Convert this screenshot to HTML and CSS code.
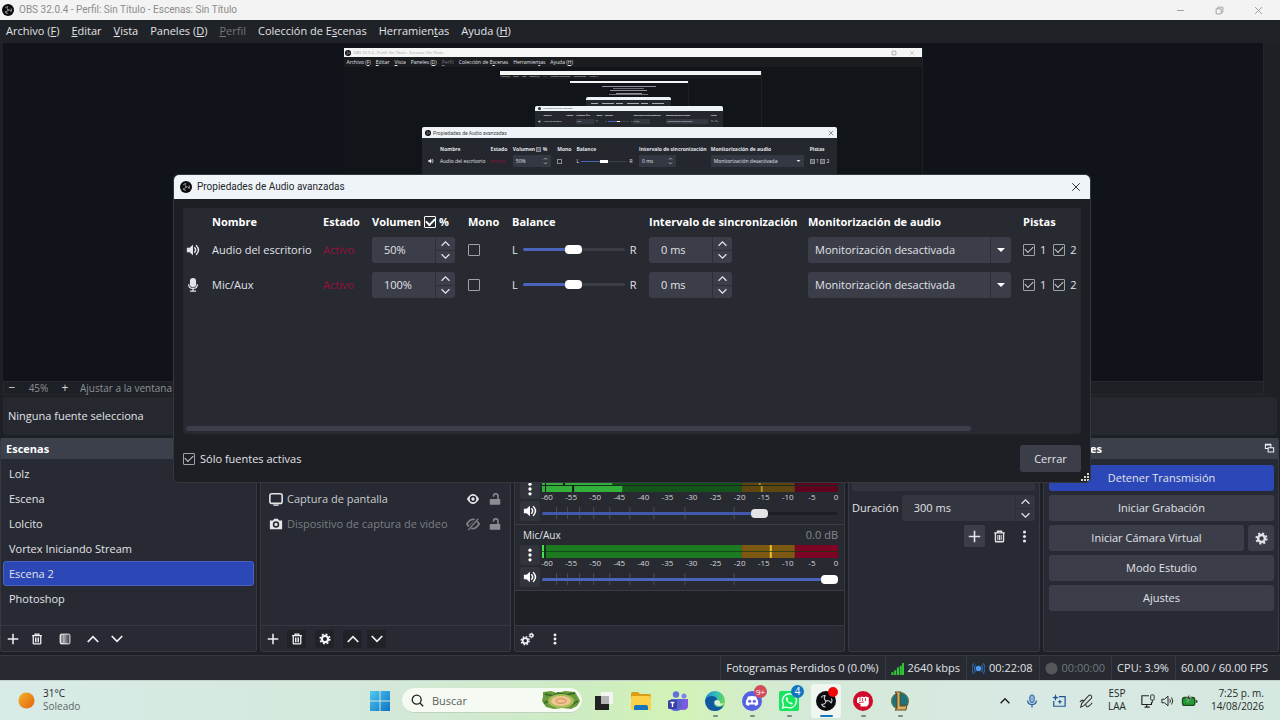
FILE: index.html
```
<!DOCTYPE html>
<html lang="es">
	<head>
		<meta charset="utf-8" />
		<title>OBS 32.0.4 - Perfil: Sin Título - Escenas: Sin Título</title>
		<link rel="stylesheet" href="styles.css">
	</head>
	<body>
		<!-- iconos compartidos -->
		<svg class="sprite" width="0" height="0">
			<symbol id="obs" viewBox="0 0 24 24">
				<circle cx="12" cy="12" r="12" fill="#0b0b0d"/>
				<g fill="none" stroke="#c4c7cd" stroke-width="1.400" stroke-linecap="round">
					<path d="M12 12C10 10.500 9.500 8 11 5.500M11 5.500Q8 5 6.500 7.500"/>
					<path d="M12 12C10 10.500 9.500 8 11 5.500M11 5.500Q8 5 6.500 7.500" transform="rotate(120 12 12)"/>
					<path d="M12 12C10 10.500 9.500 8 11 5.500M11 5.500Q8 5 6.500 7.500" transform="rotate(240 12 12)"/>
				</g>
			</symbol>
			<symbol id="speaker" viewBox="0 0 16 16">
				<path d="M1 5.500h3L8 2v12l-4-3.500H1z" fill="currentColor"/>
				<path d="M10 5.500q2 2.500 0 5M12 3q4.500 5 0 10" fill="none" stroke="currentColor" stroke-width="1.700" stroke-linecap="round"/>
			</symbol>
			<symbol id="mic" viewBox="0 0 16 16">
				<rect x="4.500" y="0" width="7" height="10.500" rx="3.500" fill="currentColor"/>
				<path d="M3 7c0 6.500 10 6.500 10 0M8 12v3M4.500 15h7" fill="none" stroke="currentColor" stroke-width="1.500"/>
			</symbol>
			<symbol id="plus" viewBox="0 0 16 16">
				<path d="M8 1v14M1 8h14" stroke="currentColor" stroke-width="2"/>
			</symbol>
			<symbol id="trash" viewBox="0 0 16 16">
				<path d="M1.500 3.500h13M5.500 3V1.500h5V3M3 4v9.500q0 1 1 1h8q1 0 1-1V4" fill="none" stroke="currentColor" stroke-width="1.700"/>
				<path d="M6 6v6.500M8 6v6.500M10 6v6.500" stroke="currentColor" stroke-width="1.300"/>
			</symbol>
			<symbol id="up" viewBox="0 0 16 16">
				<path d="M1 12l7-7 7 7" fill="none" stroke="currentColor" stroke-width="2.300"/>
			</symbol>
			<symbol id="down" viewBox="0 0 16 16">
				<path d="M1 4l7 7 7-7" fill="none" stroke="currentColor" stroke-width="2.300"/>
			</symbol>
			<symbol id="dots" viewBox="0 0 16 16">
				<circle cx="8" cy="2.500" r="1.900" fill="currentColor"/>
				<circle cx="8" cy="8" r="1.900" fill="currentColor"/>
				<circle cx="8" cy="13.500" r="1.900" fill="currentColor"/>
			</symbol>
			<symbol id="gear" viewBox="0 0 16 16">
				<circle cx="8" cy="8" r="4.200" fill="none" stroke="currentColor" stroke-width="3"/>
				<circle cx="8" cy="8" r="6.400" fill="none" stroke="currentColor" stroke-width="2.200" stroke-dasharray="2.500 2.527"/>
			</symbol>
			<symbol id="gears" viewBox="0 0 16 16">
				<circle cx="6" cy="10" r="3" fill="none" stroke="currentColor" stroke-width="2"/>
				<circle cx="6" cy="10" r="4.600" fill="none" stroke="currentColor" stroke-width="1.600" stroke-dasharray="1.806 1.806"/>
				<circle cx="13" cy="4" r="1.700" fill="none" stroke="currentColor" stroke-width="1.500"/>
				<circle cx="13" cy="4" r="2.700" fill="none" stroke="currentColor" stroke-dasharray="1.400 1.420"/>
			</symbol>
			<symbol id="filter" viewBox="0 0 16 16">
				<linearGradient id="fade"><stop offset="0" stop-color="#eee"/><stop offset="1" stop-color="#333741"/></linearGradient>
				<rect x="1.500" y="1.500" width="13" height="13" rx="1.500" fill="url(#fade)" stroke="currentColor" stroke-width="1.300"/>
				<path d="M4 3v10" stroke="#222"/>
			</symbol>
			<symbol id="lock" viewBox="0 0 16 16">
				<rect x="1" y="8" width="14" height="7.500" rx="1" fill="currentColor"/>
				<path d="M6 5V4q0-3 3-3t3 3v4" fill="none" stroke="currentColor" stroke-width="2"/>
			</symbol>
			<symbol id="close" viewBox="0 0 16 16">
				<path d="M2 2l12 12M14 2L2 14" stroke="currentColor" stroke-width="1.500"/>
			</symbol>
			<symbol id="ticks" viewBox="0 0 295 12" preserveAspectRatio="none">
				<path d="M14.500 0v12M25.500 0v12M37.500 0v12M51.500 0v12M67.500 0v12M87.500 0v12M111.500 0v12M142.500 0v12M191.500 0v12" stroke="#4b4e57"/>
			</symbol>
		</svg>

		<div class="window">
			<header class="titlebar">
				<svg class="logo"><use href="#obs"/></svg>
				<span class="title">OBS 32.0.4 - Perfil: Sin Título - Escenas: Sin Título</span>
				<div class="winbtns">
					<button aria-label="Minimizar"><svg viewBox="0 0 16 16"><path d="M2 8h12" stroke="currentColor" stroke-width="1.500"/></svg></button>
					<button aria-label="Restaurar"><svg viewBox="0 0 16 16"><path d="M2 5h9v9H2zM5 5V2h9v9h-3" fill="none" stroke="currentColor" stroke-width="1.300"/></svg></button>
					<button aria-label="Cerrar ventana"><svg><use href="#close"/></svg></button>
				</div>
			</header>
			<nav class="menubar">
				<a href="#">Archivo (<u>F</u>)</a>
				<a href="#"><u>E</u>ditar</a>
				<a href="#"><u>V</u>ista</a>
				<a href="#">Paneles (<u>D</u>)</a>
				<a href="#" class="off"><u>P</u>erfil</a>
				<a href="#">Colección de E<u>s</u>cenas</a>
				<a href="#">Herramien<u>t</u>as</a>
				<a href="#">Ayuda (<u>H</u>)</a>
			</nav>

			<main class="preview">
				<div class="canvas">
					<!-- captura de la propia pantalla, repetida hacia dentro -->
					<div class="capture">
						<div class="cap-title">
							<svg><use href="#obs"/></svg>
							<span>OBS 32.0.4 - Perfil: Sin Título - Escenas: Sin Título</span>
							<svg class="cap-max" viewBox="0 0 16 16"><path d="M3 3h10v10H3z" fill="none" stroke="#999" stroke-width="2"/></svg>
							<svg class="cap-x"><use href="#close"/></svg>
						</div>
						<div class="cap-menu">
							<span>Archivo (<u>F</u>)</span><span><u>E</u>ditar</span><span><u>V</u>ista</span><span>Paneles (<u>D</u>)</span><span class="off"><u>P</u>erfil</span><span>Colección de E<u>s</u>cenas</span><span>Herramien<u>t</u>as</span><span>Ayuda (<u>H</u>)</span>
						</div>
						<div class="capture capture2">
							<div class="cap-title"></div>
							<div class="cap-menu">
								<span>Archivo (F)</span><span>Editar</span><span>Vista</span><span>Paneles (D)</span><span class="off">Perfil</span><span>Colección de Escenas</span><span>Herramientas</span><span>Ayuda (H)</span>
							</div>
							<div class="capture capture3">
								<div class="cap-title"></div>
								<svg class="depth" viewBox="0 0 119 24">
									<path d="M32 3.500h54M40 7.500h37M46 10.500h26" stroke="#8f929a"/>
									<path d="M43 5.500h31M39 11.500h39" stroke="#6d7078"/>
								</svg>
							</div>
						</div>
					</div>
					<div class="mini mini3">
						<div class="mini-title"></div>
						<svg viewBox="0 0 85 8"><path d="M5 3.500h75" stroke="#a9acb2" stroke-dasharray="7 4 12 2"/><path d="M5 6.500h75" stroke="#686c75" stroke-dasharray="10 3 5 2"/></svg>
					</div>
					<div class="mini mini2">
						<div class="mini-title"><svg><use href="#obs"/></svg><span>Propiedades de Audio avanzadas</span></div>
						<div class="mini-grid">
							<b></b><b>Nombre</b><b>Estado</b><b>Volumen ☑ %</b><b>Mono</b><b>Balance</b><b>Intervalo de sincronización</b><b>Monitorización de audio</b><b>Pistas</b>
							<i><svg><use href="#speaker"/></svg></i><i>Audio del escritorio</i><i class="red">Activo</i><i><em class="w-spin">50%</em></i><i>☐</i><i class="bal">L<em class="w-bar"></em>R</i><i><em class="w-spin">0 ms</em></i><i><em class="w-sel">Monitorización desactivada</em></i><i>☑ 1 ☑ 2</i>
						</div>
					</div>
					<div class="mini mini1">
						<div class="mini-title"><svg><use href="#obs"/></svg><span>Propiedades de Audio avanzadas</span><svg class="x"><use href="#close"/></svg></div>
						<div class="mini-grid">
							<b></b><b>Nombre</b><b>Estado</b><b>Volumen <em class="w-box on"></em> %</b><b>Mono</b><b>Balance</b><b>Intervalo de sincronización</b><b>Monitorización de audio</b><b>Pistas</b>
							<i><svg><use href="#speaker"/></svg></i><i>Audio del escritorio</i><i class="red">Activo</i><i><em class="w-spin">50%<svg viewBox="0 0 8 16"><path d="M1 5l3-3 3 3M1 11l3 3 3-3" fill="none" stroke="currentColor" stroke-width="1.300"/></svg></em></i><i><em class="w-box"></em></i><i class="bal">L<em class="w-bar"></em>R</i><i><em class="w-spin">0 ms<svg viewBox="0 0 8 16"><path d="M1 5l3-3 3 3M1 11l3 3 3-3" fill="none" stroke="currentColor" stroke-width="1.300"/></svg></em></i><i><em class="w-sel">Monitorización desactivada<svg viewBox="0 0 8 16"><path d="M0 6h8l-4 4z" fill="currentColor"/></svg></em></i><i><em class="w-box on"></em> 1 <em class="w-box on"></em> 2</i>
						</div>
					</div>
				</div>
				<div class="zoombar">
					<button aria-label="Alejar">−</button>
					<span class="pct">45%</span>
					<button aria-label="Acercar">+</button>
					<span class="fit">Ajustar a la ventana</span>
				</div>
			</main>

			<div class="context">Ninguna fuente selecciona</div>

			<section class="docks">
				<div class="dock">
					<h2>Escenas</h2>
					<ul class="list">
						<li>Lolz</li>
						<li>Escena</li>
						<li>Lolcito</li>
						<li>Vortex Iniciando Stream</li>
						<li class="sel">Escena 2</li>
						<li>Photoshop</li>
					</ul>
					<div class="tools">
						<button aria-label="Añadir escena"><svg><use href="#plus"/></svg></button>
						<button aria-label="Eliminar escena"><svg><use href="#trash"/></svg></button>
						<button aria-label="Filtros" class="wide"><svg><use href="#filter"/></svg></button>
						<button aria-label="Subir"><svg><use href="#up"/></svg></button>
						<button aria-label="Bajar"><svg><use href="#down"/></svg></button>
					</div>
				</div>

				<div class="dock">
					<h2></h2>
					<ul class="list sources">
						<li>
							<svg viewBox="0 0 16 16"><rect x="1" y="2" width="14" height="11" rx="2" fill="none" stroke="currentColor" stroke-width="1.800"/><path d="M5 15h6" stroke="currentColor" stroke-width="1.500"/></svg>
							<span>Captura de pantalla</span>
							<svg viewBox="0 0 16 16"><path d="M1 8q7-11.500 14 0q-7 11.500-14 0z" fill="currentColor"/><circle cx="8" cy="8" r="3.700" fill="#272a33"/><circle cx="8" cy="8" r="1.900" fill="currentColor"/></svg>
							<svg class="lock"><use href="#lock"/></svg>
						</li>
						<li class="hidden-src">
							<svg viewBox="0 0 16 16"><path d="M1 4h3.500L6 2h4l1.500 2H15v10H1z" fill="currentColor"/><circle cx="8" cy="8.500" r="2.800" fill="none" stroke="#272a33" stroke-width="1.800"/></svg>
							<span>Dispositivo de captura de video</span>
							<svg viewBox="0 0 16 16"><path d="M1 8q7-10.500 14 0q-7 10.500-14 0z" fill="none" stroke="currentColor" stroke-width="2.200"/><path d="M5 10l5-5" stroke="currentColor" stroke-width="3"/><path d="M2 15L14 1" stroke="#272a33" stroke-width="3.500"/><path d="M2.500 15L14 2" stroke="currentColor" stroke-width="1.700"/></svg>
							<svg class="lock"><use href="#lock"/></svg>
						</li>
					</ul>
					<div class="tools boxed">
						<button aria-label="Añadir fuente" class="flat"><svg><use href="#plus"/></svg></button>
						<button aria-label="Eliminar fuente"><svg><use href="#trash"/></svg></button>
						<button aria-label="Propiedades" class="wide"><svg><use href="#gear"/></svg></button>
						<button aria-label="Subir fuente"><svg><use href="#up"/></svg></button>
						<button aria-label="Bajar fuente"><svg><use href="#down"/></svg></button>
					</div>
				</div>

				<div class="dock">
					<h2></h2>
					<div class="mixer">
						<div class="channel">
							<div class="ch-name"></div>
							<div class="ch-body">
								<div class="ch-btns">
									<button aria-label="Opciones del escritorio"><svg><use href="#dots"/></svg></button>
									<button aria-label="Silenciar escritorio"><svg><use href="#speaker"/></svg></button>
								</div>
								<div class="ch-meter">
									<svg class="meter" viewBox="0 0 295 13" preserveAspectRatio="none">
										<path d="M0 0h199v13H0z" fill="#14541a"/><path d="M199 0h53v13h-53z" fill="#5d4610"/><path d="M252 0h43v13h-43z" fill="#5e0420"/>
										<path d="M0 0h70v6H0zM0 7h80v6H0z" fill="#31b139"/>
										<path d="M3 0h1v13H3zM21 0h2v6h-2zM30 7h2v6h-2z" fill="#0d140e"/>
										<path d="M216 0h2v6h-2zM218 7h2v6h-2z" fill="#b28d27"/>
										<path d="M0 6h295v1H0z" fill="#1a2a20"/>
									</svg>
									<div class="scale"><span>-60</span><span>-55</span><span>-50</span><span>-45</span><span>-40</span><span>-35</span><span>-30</span><span>-25</span><span>-20</span><span>-15</span><span>-10</span><span>-5</span><span>0</span></div>
									<div class="fader dim">
										<svg><use href="#ticks"/></svg>
										<input type="range" aria-label="Volumen escritorio" min="0" max="100" value="75" style="--fill: 75%">
									</div>
								</div>
							</div>
						</div>
						<div class="channel">
							<div class="ch-name"><span>Mic/Aux</span><span class="db">0.0 dB</span></div>
							<div class="ch-body">
								<div class="ch-btns">
									<button aria-label="Opciones de Mic/Aux"><svg><use href="#dots"/></svg></button>
									<button aria-label="Silenciar Mic/Aux"><svg><use href="#speaker"/></svg></button>
								</div>
								<div class="ch-meter">
									<svg class="meter" viewBox="0 0 295 13" preserveAspectRatio="none">
										<path d="M0 0h199v13H0z" fill="#1c7a20"/><path d="M199 0h53v13h-53z" fill="#7c5812"/><path d="M252 0h43v13h-43z" fill="#7c0526"/>
										<path d="M0 0h2v13H0z" fill="#4be04f"/><path d="M2 0h2v13H2z" fill="#10301a"/>
										<path d="M227 0h2v13h-2z" fill="#f2c02c"/>
										<path d="M0 6h295v1H0z" fill="#0d3a16" opacity=".7"/>
									</svg>
									<div class="scale"><span>-60</span><span>-55</span><span>-50</span><span>-45</span><span>-40</span><span>-35</span><span>-30</span><span>-25</span><span>-20</span><span>-15</span><span>-10</span><span>-5</span><span>0</span></div>
									<div class="fader">
										<svg><use href="#ticks"/></svg>
										<input type="range" aria-label="Volumen Mic/Aux" min="0" max="100" value="100" style="--fill: 100%">
									</div>
								</div>
							</div>
						</div>
					</div>
					<div class="tools">
						<button aria-label="Audio avanzado"><svg class="big"><use href="#gears"/></svg></button>
						<button aria-label="Opciones del mezclador" class="wide"><svg><use href="#dots"/></svg></button>
					</div>
				</div>

				<div class="dock">
					<h2></h2>
					<div class="trans">
						<div class="combo-strip"></div>
						<div class="row">
							<label for="dur">Duración</label>
							<div class="spin"><input id="dur" type="text" value="300 ms"><button aria-label="Más duración"><svg><use href="#up"/></svg></button><button aria-label="Menos duración"><svg><use href="#down"/></svg></button></div>
						</div>
						<div class="trans-btns">
							<button class="lit" aria-label="Añadir transición"><svg><use href="#plus"/></svg></button>
							<button aria-label="Eliminar transición"><svg><use href="#trash"/></svg></button>
							<button aria-label="Más opciones"><svg><use href="#dots"/></svg></button>
						</div>
					</div>
				</div>

				<div class="dock">
					<h2>Controles <svg viewBox="0 0 16 16"><path d="M2 2h8v6H2zM2 3h8" fill="none" stroke="#eee" stroke-width="1.500"/><path d="M6 7h8v6H6z" fill="#3c404b" stroke="#eee" stroke-width="1.500"/></svg></h2>
					<div class="controls">
						<button class="btn primary">Detener Transmisión</button>
						<button class="btn">Iniciar Grabación</button>
						<div class="pair">
							<button class="btn">Iniciar Cámara Virtual</button>
							<button class="btn cog" aria-label="Configurar cámara"><svg><use href="#gear"/></svg></button>
						</div>
						<button class="btn">Modo Estudio</button>
						<button class="btn">Ajustes</button>
					</div>
				</div>
			</section>

			<footer class="status">
				<span>Fotogramas Perdidos 0 (0.0%)</span>
				<span><svg viewBox="0 0 14 14"><path d="M1.500 14v-3M4.500 14V9M7.500 14V6M10.500 14V4M13 14V1" stroke="#30c437" stroke-width="2.300"/></svg>2640 kbps</span>
				<span><svg viewBox="0 0 14 14"><circle cx="7" cy="7" r="3" fill="#4b9af0"/><path d="M4 3q-3 4 0 8M10 3q3 4 0 8M2 1.500q-4 5.500 0 11M12 1.500q4 5.500 0 11" fill="none" stroke="#2d68ad" stroke-width="1.200"/></svg>00:22:08</span>
				<span class="off"><svg viewBox="0 0 14 14"><circle cx="7" cy="7" r="6.500" fill="#55575b"/></svg>00:00:00</span>
				<span>CPU: 3.9%</span>
				<span>60.00 / 60.00 FPS</span>
			</footer>
		</div>

		<!-- propiedades de audio avanzadas -->
		<div class="dialog" role="dialog" aria-labelledby="dlg-title">
			<header class="dlg-title">
				<svg class="logo"><use href="#obs"/></svg>
				<span id="dlg-title">Propiedades de Audio avanzadas</span>
				<button aria-label="Cerrar diálogo"><svg><use href="#close"/></svg></button>
			</header>
			<div class="dlg-area">
				<table>
					<colgroup><col class="c-icon"><col class="c-name"><col class="c-state"><col class="c-vol"><col class="c-mono"><col class="c-bal"><col class="c-sync"><col class="c-mon"><col></colgroup>
					<thead>
						<tr>
							<th></th><th>Nombre</th><th>Estado</th>
							<th><label>Volumen <input type="checkbox" class="strong" checked> %</label></th>
							<th>Mono</th><th>Balance</th><th>Intervalo de sincronización</th><th>Monitorización de audio</th><th>Pistas</th>
						</tr>
					</thead>
					<tbody>
						<tr>
							<td><svg class="src"><use href="#speaker"/></svg></td>
							<td>Audio del escritorio</td>
							<td class="red">Activo</td>
							<td><div class="spin"><input type="text" aria-label="Volumen" value="50%"><button aria-label="Subir volumen"><svg><use href="#up"/></svg></button><button aria-label="Bajar volumen"><svg><use href="#down"/></svg></button></div></td>
							<td><label><input type="checkbox" aria-label="Mono"></label></td>
							<td><div class="balance">L <input type="range" aria-label="Balance" value="50" style="--fill: 50%"> R</div></td>
							<td><div class="spin"><input type="text" aria-label="Sincronización" value="0 ms"><button aria-label="Más retardo"><svg><use href="#up"/></svg></button><button aria-label="Menos retardo"><svg><use href="#down"/></svg></button></div></td>
							<td><div class="combo"><select aria-label="Monitorización"><option>Monitorización desactivada</option></select></div></td>
							<td><div class="tracks"><label><input type="checkbox" checked>1</label><label><input type="checkbox" checked>2</label></div></td>
						</tr>
						<tr>
							<td><svg class="src"><use href="#mic"/></svg></td>
							<td>Mic/Aux</td>
							<td class="red">Activo</td>
							<td><div class="spin"><input type="text" aria-label="Volumen Mic" value="100%"><button aria-label="Subir volumen"><svg><use href="#up"/></svg></button><button aria-label="Bajar volumen"><svg><use href="#down"/></svg></button></div></td>
							<td><label><input type="checkbox" aria-label="Mono Mic"></label></td>
							<td><div class="balance">L <input type="range" aria-label="Balance Mic" value="50" style="--fill: 50%"> R</div></td>
							<td><div class="spin"><input type="text" aria-label="Sincronización Mic" value="0 ms"><button aria-label="Más retardo"><svg><use href="#up"/></svg></button><button aria-label="Menos retardo"><svg><use href="#down"/></svg></button></div></td>
							<td><div class="combo"><select aria-label="Monitorización Mic"><option>Monitorización desactivada</option></select></div></td>
							<td><div class="tracks"><label><input type="checkbox" checked>1</label><label><input type="checkbox" checked>2</label></div></td>
						</tr>
					</tbody>
				</table>
				<div class="hscroll"></div>
			</div>
			<div class="dlg-foot">
				<label><input type="checkbox" checked>Sólo fuentes activas</label>
				<button class="btn">Cerrar</button>
			</div>
			<svg class="grip" viewBox="0 0 8 8"><path d="M6 0h2v2H6zM3 3h2v2H3zM6 3h2v2H6zM0 6h2v2H0zM3 6h2v2H3zM6 6h2v2H6z" fill="#d9d9c8"/></svg>
		</div>

		<footer class="taskbar">
			<div class="weather">
				<svg viewBox="0 0 18 18"><linearGradient id="sun" x2="1" y2="1"><stop offset="0" stop-color="#f5b32c"/><stop offset="1" stop-color="#e4620e"/></linearGradient><circle cx="9" cy="9" r="8.500" fill="url(#sun)"/></svg>
				<p>31°C<br><span>Soleado</span></p>
			</div>
			<div class="apps">
				<button class="app" aria-label="Inicio"><svg viewBox="0 0 20 20"><linearGradient id="win" x2="1" y2="1"><stop offset="0" stop-color="#4fc9f0"/><stop offset="1" stop-color="#0d72c5"/></linearGradient><path d="M0 0h9.500v9.500H0zM10.500 0H20v9.500h-9.500zM0 10.500h9.500V20H0zM10.500 10.500H20V20h-9.500z" fill="url(#win)"/></svg></button>
				<div class="search">
					<svg class="lens" viewBox="0 0 16 16"><circle cx="7" cy="7" r="5.500" fill="none" stroke="#222" stroke-width="1.600"/><path d="M11 11l4 4" stroke="#222" stroke-width="1.800"/></svg>
					<input type="text" aria-label="Buscar" placeholder="Buscar">
					<svg class="art" viewBox="0 0 40 20"><path d="M2 2l8-1 6 2 8-2 10 1 3 5 2 4-3 5-6 3-9-1-8 1-8-2-4-6 1-4z" fill="#6a9a3a"/><path d="M4 4l8 2 5-3 8 2 9-2M3 13l8-3M30 15l7-4" stroke="#38702c" stroke-width="2" fill="none"/><ellipse cx="20" cy="11" rx="13" ry="7" fill="#a7bd58"/><ellipse cx="20" cy="11" rx="10" ry="5" fill="#efc591"/><ellipse cx="20" cy="11" rx="5" ry="2.200" fill="none" stroke="#d28461"/></svg>
				</div>
				<button class="app" aria-label="Vista de tareas"><svg viewBox="0 0 20 20"><path d="M7 1h12v12H7z" fill="#f4f4f4"/><path d="M1 5h6v8h8v6H1z" fill="#222"/><path d="M7 5h8v8H7z" fill="#b5b5b5"/></svg></button>
				<button class="app" aria-label="Explorador"><svg viewBox="0 0 20 20"><path d="M0 3q0-2 2-2h5l2 2h9q2 0 2 2v4H0z" fill="#dc9d16"/><rect y="5" width="20" height="14" rx="1.500" fill="#fbcf47"/><path d="M3 19v-3q0-2 2-2h10q2 0 2 2v3z" fill="#1673bd"/></svg></button>
				<button class="app" aria-label="Teams"><svg viewBox="0 0 20 20"><circle cx="8" cy="3.500" r="3.200" fill="#6470dc"/><circle cx="16" cy="5" r="2.500" fill="#7c84e8"/><path d="M10 8h10v7q0 4-5 4t-5-4z" fill="#7b5be0"/><path d="M3 8h11v7q0 5-6 5t-6-5z" fill="#5a62d2"/><rect y="9" width="9" height="9" rx="1.500" fill="#3c3fa5"/><path d="M2.500 11.500h4M4.500 11.500v4.500" stroke="#fff" stroke-width="1.300"/></svg></button>
				<button class="app run" aria-label="Edge"><svg viewBox="0 0 20 20"><linearGradient id="edge" x2="1" y2=".3"><stop offset="0" stop-color="#1887d8"/><stop offset=".6" stop-color="#35c1b5"/><stop offset="1" stop-color="#66d655"/></linearGradient><circle cx="10" cy="10" r="10" fill="url(#edge)"/><path d="M0 10q1-5 7-5 6 .5 5 5-3-1-3 2 0 4 5 4 3 0 5-2-3 6-9 6-9 0-10-10z" fill="#125a9f"/><path d="M12 9q-3 0-2.500 3 1 3 5 3 3 0 5-3-2 1-5 0 2-2-2.500-3z" fill="#dcf0d4"/></svg></button>
				<button class="app run" aria-label="Discord"><svg viewBox="0 0 20 20"><circle cx="10" cy="10" r="10" fill="#5560e4"/><path d="M6 5.500q4-1.200 8 0 2.500 4 2.200 8L13.500 15l-1-1.500h-5L6.500 15l-2.700-1.500Q3.500 9.500 6 5.500z" fill="#fff"/><circle cx="7.700" cy="10.300" r="1.500" fill="#5560e4"/><circle cx="12.300" cy="10.300" r="1.500" fill="#5560e4"/></svg><span class="badge pink">9+</span></button>
				<button class="app run" aria-label="WhatsApp"><svg viewBox="0 0 20 20"><rect width="20" height="20" rx="2" fill="#15e45c"/><path d="M3.500 17l1-3.500a7 7 0 1 1 2.700 2.500z" fill="none" stroke="#e8fff0" stroke-width="1.400"/><path d="M7 6.500q-1 3 2.500 5.500 3.500 2.500 4.500.5l-2-1.500-1.300.7-2.200-2.200.8-1.300L8.300 6z" fill="#e8fff0"/></svg><span class="badge navy">4</span></button>
				<button class="app run active" aria-label="OBS"><svg><use href="#obs"/></svg><span class="badge rec"></span></button>
				<button class="app run" aria-label="Juego"><svg viewBox="0 0 20 20"><circle cx="10" cy="10" r="10" fill="#cf0a2c"/><path d="M4 8l1.500-2 2 .5 1.500-1 2 .7 1.800-.7 3 1V13l-2 2.500H7.500V13L4 11.500z" fill="#fff"/><path d="M7 7v3M9.500 7v3M12.500 7v3M6 11.500l5-.5" stroke="#cf0a2c" stroke-width=".800"/></svg></button>
				<button class="app run" aria-label="League of Legends"><svg viewBox="0 0 20 20"><circle cx="10" cy="10" r="8.500" fill="#1b737c" stroke="#7f6c3c"/><path d="M5 1h6l-1 2v12h5l2-2-1 6H5l2-2V3z" fill="#d9b15c" stroke="#65461b"/></svg></button>
			</div>
			<div class="tray">
				<svg viewBox="0 0 16 16"><path d="M3 10.500l5-5 5 5" fill="none" stroke="#222" stroke-width="1.700"/></svg>
				<svg class="blue" viewBox="0 0 16 16"><rect x="5.500" y="1" width="5" height="9" rx="2.500" fill="#8eb4e0" stroke="currentColor"/><path d="M3 7.500c0 6 10 6 10 0M8 12v3.500" fill="none" stroke="currentColor" stroke-width="1.300"/></svg>
				<svg class="blue" viewBox="0 0 16 16"><path d="M8 3h7v11H2V8" fill="none" stroke="currentColor" stroke-width="1.400"/><path d="M4 0l1 3 3 1-3 1-1 3-1-3-3-1 3-1zM9 6l.8 2 2 .8-2 .8L9 12l-.8-2.400-2-.8 2-.8z" fill="currentColor"/></svg>
				<svg viewBox="0 0 16 16"><path d="M2 15l1-4 8-9q2-1.500 3 0t0 3l-8 8zM1 9q4-4 4 0M8 12q0 4 3 2t4-4" fill="none" stroke="#333" stroke-width="1.200"/></svg>
				<p class="lang">ESP<br>LAA</p>
				<div class="sys">
					<svg viewBox="0 0 16 16"><path d="M9 2H1v10h11V9M4 15h6M6.500 12v3" fill="none" stroke="#222" stroke-width="1.300"/><rect x="11" y="1" width="4" height="6" rx="1" fill="none" stroke="#222"/><path d="M13 7v3" stroke="#222"/></svg>
					<svg viewBox="0 0 16 16"><path d="M1 6h3l4-3.500v11L4 10H1zM10 6q1.500 2 0 4M12 4q3 4 0 8" fill="none" stroke="#222" stroke-width="1.100"/></svg>
					<svg class="batt" viewBox="0 0 18 16"><rect x="1" y="4" width="14" height="9" rx="2.500" fill="#259b35" stroke="#1c4d22" stroke-width="1.500"/><path d="M17 7v3" stroke="#1c4d22" stroke-width="2"/><path d="M9 0L5.500 5.500h2.500L7 9l4-5H8.500z" fill="#111" stroke="#d9e9dc" stroke-width=".600"/></svg>
				</div>
				<p class="clock">7:25 p. m.<br>14/08/2026</p>
			</div>
		</footer>
	</body>
</html>
```
FILE: styles.css
```
* {
	box-sizing: border-box;
}
body {
	margin: 0;
	min-height: 100vh;
	display: flex;
	flex-direction: column;
	background: #1d2025;
	color: #e1e3e8;
	font-family: "Open Sans", "Noto Sans", sans-serif;
	font-size: 11px;
	line-height: 16px;
	overflow: hidden;
}
button, input, select {
	font: inherit;
	color: inherit;
	margin: 0;
}
button {
	display: flex;
	align-items: center;
	justify-content: center;
	padding: 0;
	border: 0;
	background: none;
}
p, h2, ul {
	margin: 0;
	padding: 0;
}
svg {
	display: block;
	flex: none;
}
.sprite {
	position: absolute;
}
.off {
	color: #74777d;
}

/** ventana principal **/
.window {
	flex: 1;
	display: flex;
	flex-direction: column;
}
.titlebar {
	display: flex;
	align-items: center;
	height: 20px;
	padding: 0 2px;
	gap: 5px;
	background: #f3f3f3;
	color: #8c8c8c;
}
.title {
	font-family: Roboto, sans-serif;
	font-size: 10px;
}
.logo {
	width: 12px;
	height: 12px;
}
.winbtns {
	margin-left: auto;
	display: flex;
}
.winbtns button {
	width: 39px;
}
.winbtns svg {
	width: 9px;
	height: 9px;
}
.menubar {
	display: flex;
	gap: 12px;
	padding: 3px 6px 4px;
	background: #1f2226;
}
.menubar a {
	color: #e1e3e8;
	text-decoration: none;
}
.menubar a.off {
	color: #74777d;
}

/** vista previa **/
.preview {
	flex: 1;
	display: flex;
	flex-direction: column;
	padding: 0 16px 0 3px;
}
.canvas {
	position: relative;
	flex: 1;
	background: #10131a;
	border-right: 1px solid #23262b;
	overflow: hidden;
}
.zoombar {
	display: flex;
	align-items: center;
	height: 14px;
	border: 1px solid #25282c;
	color: #8e9197;
	font-size: 10px;
}
.zoombar button {
	width: 16px;
	color: #d5d7db;
	font-size: 12px;
}
.zoombar .pct {
	width: 37px;
	text-align: center;
}
.zoombar .fit {
	margin-left: 7px;
}
.context {
	margin: 2px 3px 3px;
	padding: 11px 5px 11px;
	background: #25282f;
	border-radius: 3px;
}

.capture {
	width: 579px;
	height: 300px;
	margin: 5px auto 0;
	background: #11151a;
	border-right: 1px solid #1d2025;
	overflow: hidden;
	font-size: 5px;
	line-height: 8px;
}
.cap-title {
	display: flex;
	align-items: center;
	gap: 3px;
	height: 9px;
	padding: 0 2px 0 1px;
	background: #f5f5f5;
	color: #a4a4a4;
	font-size: 4px;
}
.cap-title svg {
	width: 6px;
	height: 6px;
}
.cap-title .cap-max {
	margin-left: auto;
	margin-right: 9px;
}
.cap-title .cap-x {
	margin-right: 5px;
}
.cap-menu {
	display: flex;
	gap: 5px;
	padding: 1px 3px;
	background: #1a1c20;
}
.capture2 {
	width: 262px;
	height: 200px;
	margin: 4px 0 0 156px;
	font-size: 2px;
	line-height: 4px;
}
.capture2 .cap-title {
	height: 4px;
}
.capture2 .cap-menu {
	gap: 3px;
	padding: 0 1px;
}
.capture3 {
	width: 119px;
	height: 90px;
	margin: 2px 0 0 70px;
}
.capture3 .cap-title {
	height: 2px;
}
.depth {
	width: 119px;
	height: 24px;
}

/** diálogos en miniatura **/
.mini {
	position: absolute;
	background: #24272e;
	overflow: hidden;
	border-radius: 2px 2px 0 0;
}
.mini1 {
	left: 419px;
	top: 84px;
	width: 415px;
	height: 140px;
	font-size: 5px;
	line-height: 8px;
}
.mini2 {
	left: 532px;
	top: 63px;
	width: 188px;
	height: 60px;
	font-size: 2px;
	line-height: 3px;
}
.mini3 {
	left: 583px;
	top: 54px;
	width: 85px;
	height: 20px;
}
.mini-title {
	display: flex;
	align-items: center;
	gap: 2px;
	height: 11px;
	padding: 0 3px;
	background: #eef3f7;
	color: #444;
	font-family: Roboto, sans-serif;
}
.mini-title .x {
	margin-left: auto;
}
.mini-title svg, .mini-grid svg {
	width: 6px;
	height: 6px;
}
.mini2 .mini-title {
	height: 5px;
}
.mini2 svg {
	width: 3px;
	height: 3px;
}
.mini3 .mini-title {
	height: 3px;
}
.mini3 > svg {
	width: 85px;
	height: 8px;
}
.mini-grid {
	display: grid;
	grid-template-columns: 12fr 50fr 22fr 44fr 19fr 62fr 71fr 98fr 27fr;
	grid-auto-rows: 12px;
	align-items: center;
	padding: 5px 0 0 6px;
	white-space: nowrap;
}
.mini2 .mini-grid {
	grid-auto-rows: 6px;
	padding: 1px 0 0 3px;
}
.mini-grid i, .mini-grid em {
	font-style: normal;
}
.w-spin, .w-sel {
	display: flex;
	align-items: center;
	justify-content: space-between;
	width: 86%;
	padding: 2px 3px;
	background: #343842;
}
.mini2 em {
	padding: 1px;
}
.mini-grid i:nth-child(16) .w-spin {
	width: 52%;
}
.w-sel {
	width: 94%;
}
.mini-grid em svg {
	width: 5px;
	height: 8px;
}
.w-box {
	display: inline-block;
	width: 5px;
	height: 5px;
	border: 1px solid #8a8d94;
	vertical-align: middle;
}
.w-box.on {
	background: #5b5e66;
}
.bal {
	display: flex;
	align-items: center;
	gap: 2px;
}
.w-bar {
	width: 74%;
	height: 3px;
	background: linear-gradient(90deg, transparent 42%, #fff 42%, #fff 58%, transparent 58%), linear-gradient(90deg, #4760b8 50%, #3b3f49 50%) center / 100% 1px no-repeat;
}
.mini2 .w-bar {
	height: 1px;
	padding: 0;
}
.red {
	color: #9a1039;
}

/** paneles **/
.docks {
	display: grid;
	grid-template-columns: 257fr 251fr 331fr 192fr 236fr;
	gap: 3px;
	padding-right: 1px;
}
.dock {
	display: flex;
	flex-direction: column;
	min-height: 214px;
	min-width: 0;
	background: #272a33;
	border: 1px solid #363943;
	border-top: 0;
	border-radius: 3px;
}
.dock h2 {
	display: flex;
	align-items: center;
	justify-content: space-between;
	height: 21px;
	padding: 0 3px 0 5px;
	background: #3c404b;
	font-size: 11px;
	color: #fff;
}
.dock h2 svg {
	width: 11px;
	height: 11px;
}
.list {
	flex: 1;
	list-style: none;
	padding: 2px;
}
.list li {
	display: flex;
	align-items: center;
	height: 25px;
	padding: 0 5px;
	border: 1px solid transparent;
	border-radius: 3px;
}
.list .sel {
	background: #2c47b6;
	border-color: #4a61bd;
}
.sources {
	padding-top: 27px;
}
.sources li {
	gap: 4px;
	padding-right: 3px;
	color: #c8cad0;
}
.sources span {
	flex: 1;
}
.sources svg {
	width: 14px;
	height: 14px;
	color: #e5e6ea;
}
.sources svg.lock {
	width: 12px;
	margin-left: 5px;
	margin-right: 3px;
	color: #8b8d92;
}
.sources .hidden-src span, .sources .hidden-src span + svg {
	color: #7b7e84;
}
.tools {
	display: flex;
	align-items: center;
	height: 26px;
	padding-left: 2px;
	gap: 5px;
	border-top: 1px solid #363943;
}
.tools button {
	width: 19px;
	height: 18px;
	border-radius: 2px;
	color: #f1f2f4;
}
.tools .wide {
	margin: 0 4px;
}
.tools svg {
	width: 12px;
	height: 12px;
}
.tools .big {
	width: 14px;
	height: 14px;
}
.boxed button {
	background: #1f2227;
}
.boxed .flat {
	background: none;
}

/** mezclador **/
.mixer {
	flex: 1;
	background: #1d2024;
}
.channel {
	height: 66px;
	padding: 2px 6px 0 5px;
	background: #272a31;
	border-bottom: 1px solid #3a3d46;
}
.ch-name {
	display: flex;
	justify-content: space-between;
	height: 18px;
	padding-left: 3px;
	font-size: 10px;
}
.ch-name .db {
	color: #85888e;
	font-size: 11px;
}
.ch-body {
	display: flex;
	gap: 2px;
}
.ch-btns {
	display: flex;
	flex-direction: column;
	gap: 2px;
}
.ch-btns button {
	width: 20px;
	height: 20px;
	background: #31343d;
	border-radius: 3px;
	color: #fff;
}
.ch-btns svg {
	width: 14px;
	height: 14px;
}
.ch-meter {
	flex: 1;
	min-width: 0;
}
.meter {
	width: 100%;
	height: 13px;
}
.scale {
	display: flex;
	margin: 0 -10px 0 -7px;
	font-size: 8px;
	line-height: 10px;
	text-align: center;
	color: #d3d5da;
}
.scale span {
	flex: 1;
}
.fader {
	position: relative;
	margin-top: 5px;
	height: 12px;
}
.fader svg {
	position: absolute;
	width: 100%;
	height: 12px;
}
.fader input {
	position: relative;
}

input[type="range"] {
	-webkit-appearance: none;
	appearance: none;
	display: block;
	width: 100%;
	height: 12px;
	background: none;
}
input[type="range"]::-webkit-slider-runnable-track {
	height: 3px;
	border-radius: 2px;
	background: linear-gradient(90deg, #4a63bb var(--fill), #3a3d46 var(--fill));
}
input[type="range"]::-webkit-slider-thumb {
	-webkit-appearance: none;
	width: 17px;
	height: 9px;
	margin-top: -3px;
	border-radius: 4px;
	background: #fff;
}
.dim input::-webkit-slider-thumb {
	background: #e4e4e4;
}
.dim input::-webkit-slider-runnable-track {
	background: linear-gradient(90deg, #4059ac var(--fill), #1c1f24 var(--fill));
}

/** campos **/
.spin {
	display: grid;
	grid-template-columns: 1fr 19px;
	grid-template-rows: 13px 13px;
	background: #3b3e49;
	border-radius: 3px;
	overflow: hidden;
}
.spin input {
	grid-row: 1 / 3;
	width: 100%;
	min-width: 0;
	padding: 0 0 0 12px;
	border: 0;
	border-right: 1px solid #2c2f37;
	background: none;
}
.spin button + button {
	border-top: 1px solid #2c2f37;
}
.spin svg {
	width: 9px;
	height: 9px;
}
input[type="checkbox"] {
	-webkit-appearance: none;
	appearance: none;
	display: inline-grid;
	place-items: center;
	width: 12px;
	height: 12px;
	border: 1px solid #a0a2a7;
	border-radius: 1px;
	vertical-align: middle;
}
input[type="checkbox"]:checked::after {
	content: '';
	width: 7px;
	height: 4px;
	margin-top: -2px;
	border: solid #d0d2d6;
	border-width: 0 0 1px 1px;
	transform: rotate(-45deg);
}
input[type="checkbox"].strong {
	border-color: #fff;
}
input[type="checkbox"].strong:checked::after {
	border-color: #fff;
	border-width: 0 0 2px 2px;
}
.btn {
	height: 26px;
	border-radius: 3px;
	background: #3b3e49;
}
.primary {
	background: #2b47b8;
}

.trans {
	padding: 6px 4px 6px 3px;
	display: flex;
	flex-direction: column;
	gap: 4px;
}
.combo-strip {
	height: 26px;
	background: #31343d;
	border-radius: 3px;
}
.row {
	display: flex;
	align-items: center;
	gap: 3px;
}
.row .spin {
	flex: 1;
	background: #33363f;
}
.trans-btns {
	display: flex;
	justify-content: flex-end;
	gap: 4px;
}
.trans-btns button {
	width: 21px;
	height: 22px;
	border-radius: 2px;
}
.trans-btns svg {
	width: 13px;
	height: 13px;
}
.trans-btns .lit {
	background: #3b3e49;
}
.controls {
	display: flex;
	flex-direction: column;
	gap: 4px;
	padding: 6px 4px 0 5px;
}
.pair {
	display: flex;
	gap: 4px;
}
.pair .btn {
	flex: 1;
}
.pair .cog {
	flex: none;
	width: 26px;
}
.cog svg {
	width: 13px;
	height: 13px;
}

.status {
	display: flex;
	justify-content: flex-end;
	height: 25px;
	margin-top: 3px;
	background: #272a31;
	border-top: 1px solid #363943;
}
.status span {
	display: flex;
	align-items: center;
	gap: 4px;
	padding: 0 6px 0 5px;
	border-left: 1px solid #363943;
}
.status span:last-child {
	padding-right: 12px;
}
.status svg {
	width: 13px;
	height: 13px;
}

/** diálogo **/
.dialog {
	position: absolute;
	left: 173px;
	top: 174px;
	width: 918px;
	background: #1d1f24;
	border: 1px solid #34373c;
	border-radius: 6px;
	overflow: hidden;
}
.dlg-title {
	display: flex;
	align-items: center;
	gap: 5px;
	height: 24px;
	padding: 0 9px 0 6px;
	background: #eff4f8;
	color: #24262a;
	font-family: Roboto, sans-serif;
	font-size: 10px;
}
.dlg-title button {
	margin-left: auto;
}
.dlg-title button svg {
	width: 10px;
	height: 10px;
}
.dlg-area {
	display: flex;
	flex-direction: column;
	height: 226px;
	margin: 9px 9px 0 9px;
	padding: 0 3px;
	background: #272a31;
	border-radius: 3px;
}
.dlg-area table {
	width: 100%;
	table-layout: fixed;
	border-collapse: collapse;
	white-space: nowrap;
}
.dlg-area th, .dlg-area td {
	padding: 0;
	text-align: left;
	height: 35px;
}
.dlg-area th {
	height: 24px;
	padding-top: 4px;
	color: #fff;
}
.dlg-area label {
	display: flex;
	align-items: center;
	gap: 5px;
}
.dlg-area th label {
	gap: 3px;
}
.c-icon { width: 26px; }
.c-name { width: 111px; }
.c-state { width: 49px; }
.c-vol { width: 96px; }
.c-mono { width: 44px; }
.c-bal { width: 137px; }
.c-sync { width: 159px; }
.c-mon { width: 215px; }
.src {
	width: 14px;
	height: 14px;
}
.dlg-area .spin {
	width: 83px;
}
.balance {
	display: flex;
	align-items: center;
	gap: 5px;
}
.balance input {
	width: 102px;
}
.combo {
	position: relative;
	width: 203px;
}
.combo select {
	-webkit-appearance: none;
	appearance: none;
	display: block;
	width: 100%;
	height: 26px;
	padding: 0 7px;
	border: 0;
	border-radius: 3px;
	background: linear-gradient(90deg, #3b3e49 182px, #2c2f37 182px, #2c2f37 183px, #3b3e49 183px);
}
.combo::after {
	content: '';
	position: absolute;
	right: 6px;
	top: 11px;
	border: 4px solid transparent;
	border-top-color: #fff;
	border-bottom: 0;
}
.tracks {
	display: flex;
	gap: 7px;
}
.hscroll {
	width: 88%;
	height: 5px;
	margin-top: auto;
	margin-bottom: 3px;
	border-radius: 2px;
	background: #3c3f49;
}
.dlg-foot {
	display: flex;
	align-items: center;
	justify-content: space-between;
	padding: 11px 9px 10px 9px;
}
.dlg-foot label {
	display: flex;
	align-items: center;
	gap: 5px;
}
.dlg-foot .btn {
	width: 61px;
	height: 27px;
}
.grip {
	position: absolute;
	right: 1px;
	bottom: 1px;
	width: 8px;
	height: 8px;
}

/** barra de tareas **/
.taskbar {
	display: grid;
	grid-template-columns: 1fr auto 1fr;
	align-items: center;
	height: 40px;
	background: linear-gradient(90deg, #d8ebe7 0, #d4e8da 30%, #cdebc2 45%, #d2f3b6 53%, #d4e9d6 62%, #d8e9e4 80%, #d5e8df 100%);
	border-top: 1px solid #c3d1cb;
	color: #24282a;
	font-size: 10px;
	line-height: 13px;
}
.weather {
	display: flex;
	align-items: center;
	gap: 8px;
	padding-left: 18px;
}
.weather p {
	margin-top: -2px;
}
.weather svg {
	width: 17px;
	height: 17px;
}
.weather span {
	color: #5d6668;
}
.apps {
	display: flex;
	align-items: center;
	gap: 7px;
}
.app {
	position: relative;
	width: 30px;
	height: 34px;
	border-radius: 3px;
}
.app svg {
	width: 20px;
	height: 20px;
}
.run::before {
	content: '';
	position: absolute;
	bottom: 1px;
	width: 5px;
	height: 2px;
	border-radius: 1px;
	background: #7c8880;
}
.active {
	background: #eff6f0;
}
.active::before {
	width: 13px;
	background: #1673be;
}
.badge {
	position: absolute;
	top: 1px;
	right: 0;
	width: 13px;
	height: 13px;
	border-radius: 50%;
	color: #fff;
	font-size: 8px;
	line-height: 13px;
}
.pink {
	background: #d14d5d;
}
.navy {
	background: #1275c0;
	font-size: 10px;
}
.rec {
	width: 10px;
	height: 10px;
	right: 3px;
	top: 3px;
	background: #ee0a0a;
}
.search {
	display: flex;
	align-items: center;
	width: 180px;
	height: 25px;
	padding: 0 1px 0 9px;
	border-radius: 13px;
	background: #f5faf3;
	border-bottom: 1px solid #c2d2bf;
}
.lens {
	width: 13px;
	height: 13px;
}
.search input {
	flex: 1;
	min-width: 0;
	padding: 0 0 0 8px;
	border: 0;
	background: none;
	font-size: 11px;
}
.search input::placeholder {
	color: #5b605e;
}
.art {
	width: 40px;
	height: 20px;
}
.tray {
	display: flex;
	align-items: center;
	justify-content: flex-end;
	gap: 13px;
	padding-right: 16px;
}
.tray p {
	margin-top: -2px;
}
.tray svg {
	width: 14px;
	height: 14px;
}
.tray svg.blue {
	color: #1f5596;
}
.sys {
	display: flex;
	gap: 6px;
}
.tray .batt {
	width: 17px;
}
.tray .lang {
	margin-left: 2px;
	margin-right: 2px;
	text-align: center;
}
.clock {
	text-align: right;
}
```
